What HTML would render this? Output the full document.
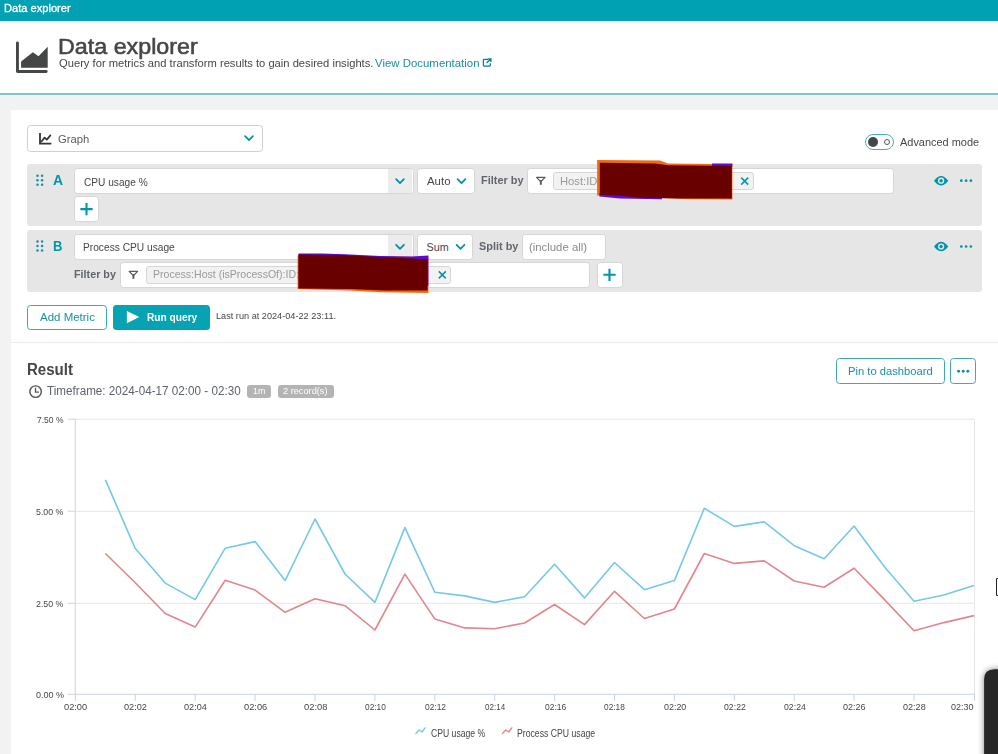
<!DOCTYPE html>
<html lang="en"><head><meta charset="utf-8"><title>Data explorer</title>
<style>

html,body{margin:0;padding:0}
body{width:998px;height:754px;position:relative;overflow:hidden;background:#f2f2f2;font-family:"Liberation Sans", sans-serif;}
.a{position:absolute;box-sizing:border-box}
.t{position:absolute;white-space:nowrap;line-height:1;transform-origin:0 0;}
.inp{position:absolute;box-sizing:border-box;background:#fff;border:1px solid #d6d6d6;border-radius:3.5px}
.row{position:absolute;background:#e6e6e6;border-radius:3px}
svg{position:absolute;left:0;top:0;overflow:visible}

</style></head><body>
<div class="a" style="left:0;top:0;width:998px;height:21px;background:#00a1b2"></div>
<div class="a" style="left:0;top:21px;width:998px;height:74px;background:#fff;border-bottom:2px solid #7fc4d0"></div>
<div class="a" style="left:11px;top:110px;width:987px;height:232px;background:#fff"></div>
<div class="a" style="left:11px;top:342px;width:987px;height:1px;background:#ececec"></div>
<div class="a" style="left:11px;top:343px;width:987px;height:411px;background:#fff"></div>
<div class="inp" style="left:27.0px;top:125.0px;width:235.5px;height:26.8px;border-color:#cfcfcf"></div>
<div class="row" style="left:27px;top:163.7px;width:955px;height:61.9px"></div>
<div class="row" style="left:27px;top:229.8px;width:955px;height:62px"></div>
<div class="inp" style="left:73.5px;top:168.0px;width:340.0px;height:26.0px"></div>
<div class="a" style="left:388px;top:169.4px;width:24px;height:23.2px;background:#ececec;border-radius:0 2px 2px 0"></div>
<div class="inp" style="left:416.5px;top:168.0px;width:58.0px;height:26.0px"></div>
<div class="inp" style="left:526.5px;top:168.0px;width:367.0px;height:26.0px"></div>
<div class="a" style="left:553px;top:172px;width:201px;height:18.2px;background:#f2f2f2;border:1px solid #d6d6d6;border-radius:3px"></div>
<div class="inp" style="left:73.5px;top:196.4px;width:25.6px;height:25.6px"></div>
<div class="inp" style="left:73.5px;top:234.0px;width:340.0px;height:25.7px"></div>
<div class="a" style="left:388px;top:235.4px;width:24px;height:22.9px;background:#ececec;border-radius:0 2px 2px 0"></div>
<div class="inp" style="left:416.5px;top:234.0px;width:56.0px;height:25.7px"></div>
<div class="inp" style="left:521.5px;top:234.0px;width:84.0px;height:25.7px"></div>
<div class="inp" style="left:119.9px;top:262.1px;width:470.0px;height:25.9px"></div>
<div class="a" style="left:146px;top:266px;width:305px;height:18.2px;background:#f2f2f2;border:1px solid #d6d6d6;border-radius:3px"></div>
<div class="inp" style="left:596.5px;top:262.1px;width:26.0px;height:25.9px"></div>
<div class="a" style="left:26.8px;top:304.8px;width:80px;height:25.2px;background:#fff;border:1.4px solid #3fa9ba;border-radius:3.5px"></div>
<div class="a" style="left:113px;top:304.6px;width:96.8px;height:25.2px;background:#08a3b3;border-radius:3.5px"></div>
<div class="a" style="left:835.6px;top:358.2px;width:109.2px;height:25.4px;background:#fff;border:1.4px solid #3fa9ba;border-radius:3.5px"></div>
<div class="a" style="left:950.3px;top:358.2px;width:25.6px;height:25.4px;background:#fff;border:1.4px solid #3fa9ba;border-radius:3.5px"></div>
<div class="a" style="left:247px;top:384.6px;width:23.6px;height:13.6px;background:#b4b4b4;border-radius:3px"></div>
<div class="a" style="left:277.8px;top:384.6px;width:56px;height:13.6px;background:#b4b4b4;border-radius:3px"></div>
<div class="a" style="left:865px;top:134px;width:29px;height:16px;background:#fff;border:1.8px solid #4aadbd;border-radius:8px"></div>
<div class="a" style="left:868px;top:137px;width:10px;height:10px;background:#454646;border-radius:5px"></div>
<div class="a" style="left:884px;top:139px;width:6px;height:6px;border:1px solid #555;border-radius:3px"></div>
<svg width="998" height="754" viewBox="0 0 998 754">
<path d="M17.45 43 V71.45 H46.2" fill="none" stroke="#454646" stroke-width="2.9" stroke-linejoin="round" stroke-linecap="round"/>
<path d="M21.1 67.8 V61.6 L32.9 52.2 L38.5 56.2 L47.7 46.7 V67.8 Z" fill="#454646"/>
<path d="M488 59.4 H484.2 Q483.4 59.4 483.4 60.2 V65.3 Q483.4 66.1 484.2 66.1 H489.6 Q490.4 66.1 490.4 65.3 V63.3" fill="none" stroke="#00848e" stroke-width="1.3"/>
<path d="M486.6 63 L490.6 59 M487.8 58.8 H490.9 V61.9" fill="none" stroke="#00848e" stroke-width="1.3"/>
<path d="M40 133 V143.6 H51.3" fill="none" stroke="#333" stroke-width="1.8"/>
<path d="M41.5 141.5 L44.6 137.6 L46.8 139.6 L50.4 135.4" fill="none" stroke="#333" stroke-width="1.7" stroke-linejoin="round" stroke-linecap="round"/>
<path d="M245.1 136.2 L249.0 140.2 L252.9 136.2" fill="none" stroke="#0095a8" stroke-width="1.8" stroke-linecap="round" stroke-linejoin="round"/>
<path d="M396.1 179.2 L400.0 183.2 L403.9 179.2" fill="none" stroke="#0095a8" stroke-width="1.8" stroke-linecap="round" stroke-linejoin="round"/>
<path d="M457.6 179.2 L461.5 183.2 L465.4 179.2" fill="none" stroke="#0095a8" stroke-width="1.8" stroke-linecap="round" stroke-linejoin="round"/>
<path d="M396.1 244.8 L400.0 248.8 L403.9 244.8" fill="none" stroke="#0095a8" stroke-width="1.8" stroke-linecap="round" stroke-linejoin="round"/>
<path d="M456.6 244.8 L460.5 248.8 L464.4 244.8" fill="none" stroke="#0095a8" stroke-width="1.8" stroke-linecap="round" stroke-linejoin="round"/>
<circle cx="37.5" cy="175.7" r="1.2" fill="#0b8fa1"/>
<circle cx="37.5" cy="180.2" r="1.2" fill="#0b8fa1"/>
<circle cx="37.5" cy="184.7" r="1.2" fill="#0b8fa1"/>
<circle cx="42.1" cy="175.7" r="1.2" fill="#0b8fa1"/>
<circle cx="42.1" cy="180.2" r="1.2" fill="#0b8fa1"/>
<circle cx="42.1" cy="184.7" r="1.2" fill="#0b8fa1"/>
<circle cx="37.5" cy="241.5" r="1.2" fill="#0b8fa1"/>
<circle cx="37.5" cy="246.0" r="1.2" fill="#0b8fa1"/>
<circle cx="37.5" cy="250.5" r="1.2" fill="#0b8fa1"/>
<circle cx="42.1" cy="241.5" r="1.2" fill="#0b8fa1"/>
<circle cx="42.1" cy="246.0" r="1.2" fill="#0b8fa1"/>
<circle cx="42.1" cy="250.5" r="1.2" fill="#0b8fa1"/>
<path d="M80.4 209.1 H92.6 M86.5 203.0 V215.2" stroke="#0095a8" stroke-width="2.1" fill="none"/>
<path d="M603.4 274.8 H615.6 M609.5 268.7 V280.9" stroke="#0095a8" stroke-width="2.1" fill="none"/>
<path d="M536.6 177.4 h8.4 l-3.6 3.7 h-1.2 z" fill="none" stroke="#5a5a5a" stroke-width="1.3" stroke-linejoin="round"/><path d="M540.8 180.2 v4.6" fill="none" stroke="#5a5a5a" stroke-width="1.9"/>
<path d="M129.2 271.4 h8.4 l-3.6 3.7 h-1.2 z" fill="none" stroke="#5a5a5a" stroke-width="1.3" stroke-linejoin="round"/><path d="M133.4 274.2 v4.6" fill="none" stroke="#5a5a5a" stroke-width="1.9"/>
<path d="M741.2 177.6 L748.2 184.6 M741.2 184.6 L748.2 177.6" stroke="#0095a8" stroke-width="1.5" fill="none"/>
<path d="M438.8 271.4 L445.8 278.4 M438.8 278.4 L445.8 271.4" stroke="#0095a8" stroke-width="1.5" fill="none"/>
<path d="M934 180.7 Q941 171.1 948.3 180.7 Q941 190.3 934 180.7 Z" fill="#0095a8"/>
<circle cx="941.1" cy="180.7" r="3.1" fill="#e6e6e6"/>
<circle cx="941.1" cy="180.7" r="1.7" fill="#0095a8"/>
<circle cx="961.3" cy="180.7" r="1.35" fill="#0095a8"/>
<circle cx="966.1" cy="180.7" r="1.35" fill="#0095a8"/>
<circle cx="970.9" cy="180.7" r="1.35" fill="#0095a8"/>
<path d="M934 246.5 Q941 236.9 948.3 246.5 Q941 256.1 934 246.5 Z" fill="#0095a8"/>
<circle cx="941.1" cy="246.5" r="3.1" fill="#e6e6e6"/>
<circle cx="941.1" cy="246.5" r="1.7" fill="#0095a8"/>
<circle cx="961.3" cy="246.5" r="1.35" fill="#0095a8"/>
<circle cx="966.1" cy="246.5" r="1.35" fill="#0095a8"/>
<circle cx="970.9" cy="246.5" r="1.35" fill="#0095a8"/>
<circle cx="958.6" cy="371.2" r="1.45" fill="#0f8fa3"/>
<circle cx="963.2" cy="371.2" r="1.45" fill="#0f8fa3"/>
<circle cx="967.8" cy="371.2" r="1.45" fill="#0f8fa3"/>
<path d="M126.9 310.9 L139.2 317.1 L126.9 323.3 Z" fill="#fff"/>
<circle cx="35.6" cy="391.6" r="5.75" fill="none" stroke="#555" stroke-width="1.45"/>
<path d="M35.5 387.8 V392.2 H38.9" fill="none" stroke="#555" stroke-width="1.3"/>
<path d="M597.1 160 L660 160.4 L668 163.6 L732.4 164.2 L732.4 199.6 L690 199.2 L640 197 L597.1 195.5 Z" fill="#f26a0c"/>
<path d="M599.4 193 L662 195 L662 199.3 L620 198.6 L599.4 196.4 Z M712 163.6 L732.4 163.6 L732.4 166.5 L712 166.5 Z" fill="#5f08d8"/>
<path d="M599.8 162.8 L655 163.4 L668 165.2 L731.8 165.9 L731.8 198.4 L680 198.6 L640 197.8 L618 195.6 L599.8 194.8 Z" fill="#680000"/>
<path d="M297.6 255.5 L428.4 257 L428.4 292.9 L380 292.2 L350 290.6 L297.6 289 Z" fill="#f26a0c"/>
<path d="M298.6 253.5 L322 253.4 L345 254.2 L380 256 L412 256.6 L428.4 255.6 L428.4 286 L427 286 L427 260 L298.6 256.5 Z" fill="#5f08d8"/>
<path d="M298.4 254.6 L340 254.9 L385 257.2 L427.6 259.2 L427.6 290.6 L385 290.4 L350 289 L298.4 288.4 Z" fill="#680000"/>
<g fill="none" stroke="#e6e6e9" stroke-width="1">
<path d="M75 419.2 H974.5 V694"/>
<path d="M75.3 511.3 H974.5 M75.3 603.3 H974.5"/>
</g>
<g fill="none" stroke="#ccd3e6" stroke-width="1">
<path d="M75.3 419 V694.3 H975"/>
<path d="M75.4 694.3 V700.8 M135.3 694.3 V700.8 M195.2 694.3 V700.8 M255.1 694.3 V700.8 M315.0 694.3 V700.8 M374.9 694.3 V700.8 M434.8 694.3 V700.8 M494.7 694.3 V700.8 M554.6 694.3 V700.8 M614.5 694.3 V700.8 M674.4 694.3 V700.8 M734.3 694.3 V700.8 M794.2 694.3 V700.8 M854.1 694.3 V700.8 M914.0 694.3 V700.8 M974.5 694.3 V700.8"/>
<path d="M67.6 419.2 H75.3 M67.6 511.2 H75.3 M67.6 603.3 H75.3 M67.6 694.3 H75.3"/>
</g>
<polyline points="105.4,479.9 135.3,548.6 165.2,583.1 195.2,599.6 225.2,548.2 255.1,541.6 285.1,580.6 315.0,519.0 345.0,574.0 374.9,602.4 404.9,527.6 434.8,592.2 464.8,595.9 494.7,602.4 524.6,596.7 554.6,564.2 584.5,597.9 614.5,562.5 644.4,589.7 674.4,580.6 704.3,508.3 734.3,526.4 764.2,521.8 794.2,545.7 824.1,558.8 854.1,526.0 884.0,566.3 914.0,601.2 943.9,595.0 973.9,585.6" fill="none" stroke="#74c8ea" stroke-width="1.6" stroke-linejoin="round"/>
<polyline points="105.4,553.5 135.3,582.7 165.2,613.5 195.2,627.1 225.2,580.2 255.1,590.1 285.1,612.3 315.0,598.7 345.0,605.7 374.9,630.0 404.9,574.1 434.8,618.9 464.8,627.9 494.7,628.7 524.6,623.0 554.6,604.5 584.5,624.6 614.5,591.3 644.4,618.5 674.4,609.0 704.3,553.5 734.3,563.4 764.2,560.9 794.2,581.0 824.1,587.2 854.1,568.3 884.0,599.1 914.0,630.8 943.9,622.6 973.9,615.6" fill="none" stroke="#e2858c" stroke-width="1.6" stroke-linejoin="round"/>
<path d="M415.9 733.4 L419 730 L422 732 L425.1 727.9" fill="none" stroke="#74c8ea" stroke-width="1.4" stroke-linejoin="round" stroke-linecap="round"/>
<path d="M502.6 733.4 L505.7 730 L508.7 732 L511.8 727.9" fill="none" stroke="#e2858c" stroke-width="1.4" stroke-linejoin="round" stroke-linecap="round"/>
<defs><filter id="bl" x="-2" y="-0.5" width="5" height="2"><feGaussianBlur stdDeviation="3.2"/></filter></defs>
<path d="M1010 669.3 H994.5 Q984.1 669.3 984.1 679.5 V770 H1010 Z" fill="#000" opacity="0.5" filter="url(#bl)"/>
<path d="M998 669.3 H994.5 Q984.1 669.3 984.1 679.5 V754 H998 Z" fill="#272727"/>
<path d="M998 578.5 H996.5 V595.5 H998" fill="none" stroke="#222" stroke-width="1"/>
</svg>
<div class="t" id="tb" style="left:3.53px;top:2.56px;font-size:10.80px;font-weight:400;color:#ffffff;transform:scaleX(1.0281);-webkit-text-stroke:0.3px #fff;">Data explorer</div>
<div class="t" id="h1" style="left:58.25px;top:35.65px;font-size:21.20px;font-weight:400;color:#454646;transform:scaleX(1.0988);-webkit-text-stroke:0.55px #454646;">Data explorer</div>
<div class="t" id="sub" style="left:59.01px;top:57.57px;font-size:11.50px;font-weight:400;color:#454646;transform:scaleX(0.9722);">Query for metrics and transform results to gain desired insights.</div>
<div class="t" id="doc" style="left:375.45px;top:57.57px;font-size:11.50px;font-weight:400;color:#1a8fa3;transform:scaleX(0.9928);">View Documentation</div>
<div class="t" id="graph" style="left:58.41px;top:133.65px;font-size:11.40px;font-weight:400;color:#5a5a5a;transform:scaleX(0.9869);">Graph</div>
<div class="t" id="adv" style="left:900.00px;top:136.74px;font-size:11.00px;font-weight:400;color:#454646;transform:scaleX(0.9949);">Advanced mode</div>
<div class="t" id="A" style="left:52.61px;top:172.73px;font-size:14.20px;font-weight:700;color:#0095a8;transform:scaleX(0.9838);">A</div>
<div class="t" id="cpu" style="left:83.93px;top:176.61px;font-size:10.80px;font-weight:400;color:#454646;transform:scaleX(0.9388);">CPU usage %</div>
<div class="t" id="auto" style="left:427.00px;top:175.66px;font-size:10.80px;font-weight:400;color:#454646;transform:scaleX(1.0575);">Auto</div>
<div class="t" id="fbA" style="left:480.52px;top:174.51px;font-size:10.50px;font-weight:700;color:#62666c;transform:scaleX(1.0425);">Filter by</div>
<div class="t" id="host" style="left:559.71px;top:175.63px;font-size:10.60px;font-weight:400;color:#9a9a9a;transform:scaleX(1.0588);">Host:ID</div>
<div class="t" id="B" style="left:52.78px;top:238.53px;font-size:14.20px;font-weight:700;color:#0095a8;transform:scaleX(0.9176);">B</div>
<div class="t" id="pcu" style="left:83.46px;top:241.71px;font-size:10.80px;font-weight:400;color:#454646;transform:scaleX(0.9441);">Process CPU usage</div>
<div class="t" id="sum" style="left:426.50px;top:241.61px;font-size:10.80px;font-weight:400;color:#454646;transform:scaleX(1.0000);">Sum</div>
<div class="t" id="sb" style="left:478.78px;top:240.66px;font-size:10.50px;font-weight:700;color:#62666c;transform:scaleX(1.0389);">Split by</div>
<div class="t" id="inc" style="left:528.70px;top:241.53px;font-size:10.60px;font-weight:400;color:#8a8a8a;transform:scaleX(1.0711);">(include all)</div>
<div class="t" id="fbB" style="left:73.83px;top:268.66px;font-size:10.50px;font-weight:700;color:#62666c;transform:scaleX(1.0275);">Filter by</div>
<div class="t" id="proc" style="left:152.85px;top:268.68px;font-size:10.60px;font-weight:400;color:#9a9a9a;transform:scaleX(0.9959);">Process:Host (isProcessOf):ID:</div>
<div class="t" id="addm" style="left:39.50px;top:311.53px;font-size:10.60px;font-weight:400;color:#1a8fa3;transform:scaleX(1.0846);">Add Metric</div>
<div class="t" id="runq" style="left:147.09px;top:311.66px;font-size:10.80px;font-weight:700;color:#ffffff;transform:scaleX(0.9410);">Run query</div>
<div class="t" id="last" style="left:215.64px;top:311.68px;font-size:9.00px;font-weight:400;color:#454646;transform:scaleX(1.0180);">Last run at 2024-04-22 23:11.</div>
<div class="t" id="res" style="left:26.76px;top:361.51px;font-size:16.00px;font-weight:700;color:#454646;transform:scaleX(0.9403);">Result</div>
<div class="t" id="tf" style="left:47.46px;top:384.69px;font-size:12.00px;font-weight:400;color:#5e626a;transform:scaleX(0.9730);">Timeframe: 2024-04-17 02:00 - 02:30</div>
<div class="t" id="b1m" style="left:252.77px;top:386.68px;font-size:9.00px;font-weight:400;color:#ffffff;transform:scaleX(0.9778);">1m</div>
<div class="t" id="b2r" style="left:283.49px;top:386.68px;font-size:9.00px;font-weight:400;color:#ffffff;transform:scaleX(1.0235);">2 record(s)</div>
<div class="t" id="pin" style="left:847.96px;top:365.61px;font-size:10.80px;font-weight:400;color:#1a8fa3;transform:scaleX(1.0375);">Pin to dashboard</div>
<div class="t" id="y75" style="left:37.15px;top:414.66px;font-size:9.50px;font-weight:400;color:#454646;transform:scaleX(0.8939);">7.50 %</div>
<div class="t" id="y50" style="left:36.14px;top:506.66px;font-size:9.50px;font-weight:400;color:#454646;transform:scaleX(0.9287);">5.00 %</div>
<div class="t" id="y25" style="left:36.14px;top:598.51px;font-size:9.50px;font-weight:400;color:#454646;transform:scaleX(0.9287);">2.50 %</div>
<div class="t" id="y00" style="left:35.56px;top:689.66px;font-size:9.50px;font-weight:400;color:#454646;transform:scaleX(0.9483);">0.00 %</div>
<div class="t" id="lg1" style="left:430.77px;top:728.58px;font-size:10.00px;font-weight:400;color:#454646;transform:scaleX(0.8629);">CPU usage %</div>
<div class="t" id="lg2" style="left:517.35px;top:728.58px;font-size:10.00px;font-weight:400;color:#454646;transform:scaleX(0.8674);">Process CPU usage</div>
<div class="t" id="x00" style="left:63.85px;top:701.74px;font-size:9.40px;font-weight:400;color:#454646;transform:scaleX(0.9870);">02:00</div>
<div class="t" id="x02" style="left:124.46px;top:701.74px;font-size:9.40px;font-weight:400;color:#454646;transform:scaleX(0.9758);">02:02</div>
<div class="t" id="x04" style="left:184.06px;top:701.74px;font-size:9.40px;font-weight:400;color:#454646;transform:scaleX(0.9739);">02:04</div>
<div class="t" id="x06" style="left:244.15px;top:701.74px;font-size:9.40px;font-weight:400;color:#454646;transform:scaleX(0.9890);">02:06</div>
<div class="t" id="x08" style="left:303.85px;top:701.74px;font-size:9.40px;font-weight:400;color:#454646;transform:scaleX(0.9978);">02:08</div>
<div class="t" id="x10" style="left:364.68px;top:701.74px;font-size:9.40px;font-weight:400;color:#454646;transform:scaleX(0.8913);">02:10</div>
<div class="t" id="x12" style="left:424.88px;top:701.74px;font-size:9.40px;font-weight:400;color:#454646;transform:scaleX(0.8967);">02:12</div>
<div class="t" id="x14" style="left:484.69px;top:701.74px;font-size:9.40px;font-weight:400;color:#454646;transform:scaleX(0.8565);">02:14</div>
<div class="t" id="x16" style="left:544.57px;top:701.74px;font-size:9.40px;font-weight:400;color:#454646;transform:scaleX(0.9011);">02:16</div>
<div class="t" id="x18" style="left:604.48px;top:701.74px;font-size:9.40px;font-weight:400;color:#454646;transform:scaleX(0.8879);">02:18</div>
<div class="t" id="x20" style="left:663.56px;top:701.74px;font-size:9.40px;font-weight:400;color:#454646;transform:scaleX(0.9522);">02:20</div>
<div class="t" id="x22" style="left:724.17px;top:701.74px;font-size:9.40px;font-weight:400;color:#454646;transform:scaleX(0.9319);">02:22</div>
<div class="t" id="x24" style="left:783.67px;top:701.74px;font-size:9.40px;font-weight:400;color:#454646;transform:scaleX(0.9304);">02:24</div>
<div class="t" id="x26" style="left:843.26px;top:701.74px;font-size:9.40px;font-weight:400;color:#454646;transform:scaleX(0.9626);">02:26</div>
<div class="t" id="x28" style="left:903.36px;top:701.74px;font-size:9.40px;font-weight:400;color:#454646;transform:scaleX(0.9670);">02:28</div>
<div class="t" id="x30" style="left:950.96px;top:701.74px;font-size:9.40px;font-weight:400;color:#454646;transform:scaleX(0.9565);">02:30</div>
</body></html>
